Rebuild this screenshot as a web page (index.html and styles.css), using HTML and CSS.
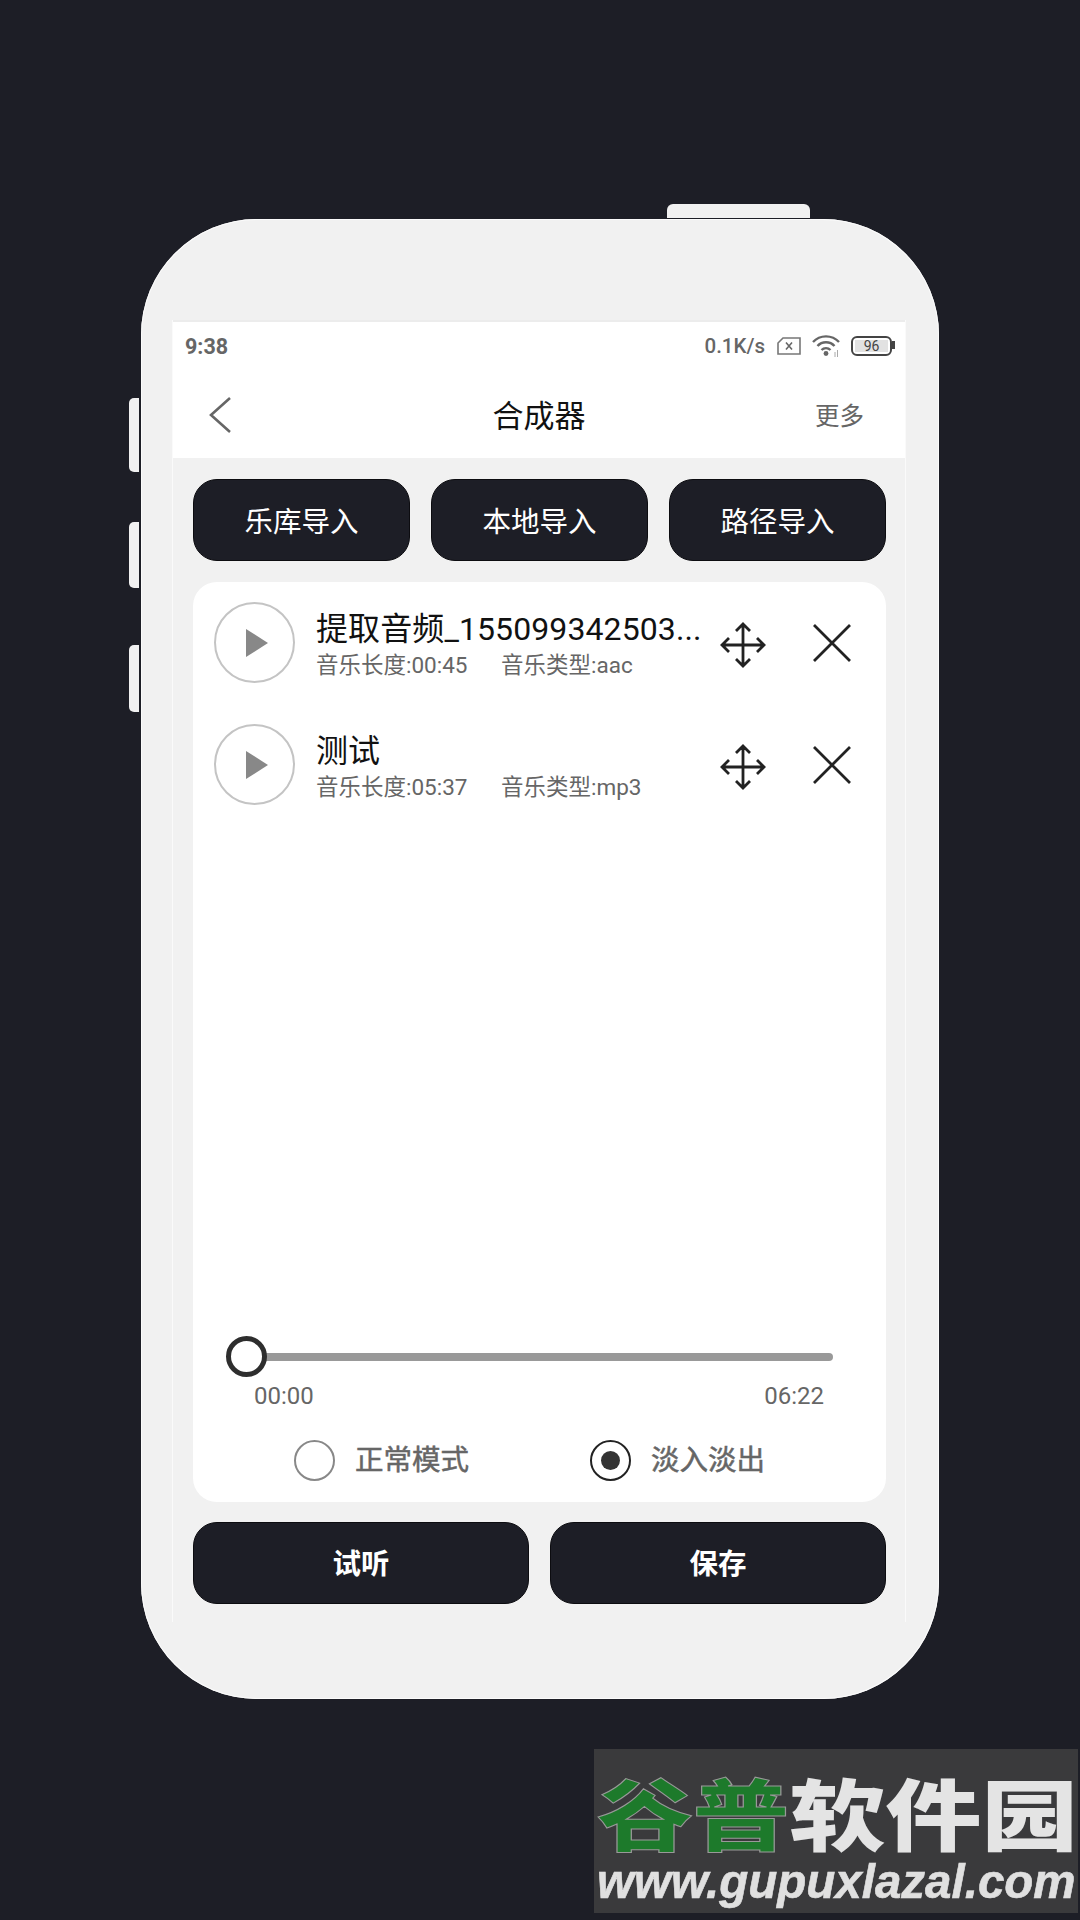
FILE: index.html
```html
<!DOCTYPE html>
<html lang="zh">
<head>
<meta charset="utf-8">
<title>合成器</title>
<link rel="stylesheet" href="styles.css">
</head>
<body>
<div class="phone">
  <span class="hw hw-top"></span>
  <span class="hw hw-a"></span>
  <span class="hw hw-b"></span>
  <span class="hw hw-c"></span>
  <div class="screen">
    <div class="status">
      <span class="clock">9:38</span>
      <div class="status-right">
        <span class="speed">0.1K/s</span>
        <svg class="sim" width="24" height="18" viewBox="0 0 24 18"><path d="M6 1H23V17H1V6Z" fill="none" stroke="#777" stroke-width="1.6"/><path d="M9 5.500L15 12.500M15 5.500L9 12.500" stroke="#666" stroke-width="1.6"/></svg>
        <svg class="wifi" width="28" height="22" viewBox="0 0 28 22"><g fill="none" stroke="#666" stroke-width="2.4"><path d="M1 7C8 -0.5 20 -0.5 27 7"/><path d="M5.5 11C10 6 18 6 22.500 11"/><path d="M9.500 15C12 12.500 16 12.500 18.500 15"/></g><circle cx="14" cy="18.500" r="2.400" fill="#666"/><path d="M23 17V22M25.500 15V22" stroke="#aaa" stroke-width="1"/></svg>
        <div class="battery"><span class="cell">96</span></div>
      </div>
    </div>
    <div class="nav">
      <svg class="back" width="22" height="36" viewBox="0 0 22 36"><path d="M21 1L2 18L21 35" fill="none" stroke="#666" stroke-width="2.600"/></svg>
      <span class="title">合成器</span>
      <span class="more">更多</span>
    </div>
    <div class="body">
      <div class="top-actions">
        <button class="btn">乐库导入</button>
        <button class="btn">本地导入</button>
        <button class="btn">路径导入</button>
      </div>
      <div class="card">
        <div class="track">
          <div class="play"><svg width="22" height="28" viewBox="0 0 22 28"><path d="M0 0L22 14L0 28Z" fill="#888"/></svg></div>
          <div class="meta">
            <div class="name">提取音频_155099342503...</div>
            <div class="info"><span class="len">音乐长度:00:45</span><span>音乐类型:aac</span></div>
          </div>
          <svg class="move" width="46" height="46" viewBox="0 0 46 46"><path d="M23 2V44M2 23H44M16 9L23 2L30 9M16 37L23 44L30 37M9 16L2 23L9 30M37 16L44 23L37 30" fill="none" stroke="#222" stroke-width="2.800"/></svg>
          <svg class="close" width="40" height="40" viewBox="0 0 40 40"><path d="M2 2L38 38M38 2L2 38" stroke="#222" stroke-width="2.800"/></svg>
        </div>
        <div class="track">
          <div class="play"><svg width="22" height="28" viewBox="0 0 22 28"><path d="M0 0L22 14L0 28Z" fill="#888"/></svg></div>
          <div class="meta">
            <div class="name">测试</div>
            <div class="info"><span class="len">音乐长度:05:37</span><span>音乐类型:mp3</span></div>
          </div>
          <svg class="move" width="46" height="46" viewBox="0 0 46 46"><path d="M23 2V44M2 23H44M16 9L23 2L30 9M16 37L23 44L30 37M9 16L2 23L9 30M37 16L44 23L37 30" fill="none" stroke="#222" stroke-width="2.800"/></svg>
          <svg class="close" width="40" height="40" viewBox="0 0 40 40"><path d="M2 2L38 38M38 2L2 38" stroke="#222" stroke-width="2.800"/></svg>
        </div>
        <div class="slider"><span class="rail"></span><span class="knob"></span></div>
        <div class="times"><span>00:00</span><span>06:22</span></div>
        <div class="modes">
          <label class="mode"><span class="radio"></span><span class="mode-text">正常模式</span></label>
          <label class="mode"><span class="radio on"></span><span class="mode-text">淡入淡出</span></label>
        </div>
      </div>
      <div class="bottom-actions">
        <button class="btn strong">试听</button>
        <button class="btn strong">保存</button>
      </div>
    </div>
  </div>
</div>
<div class="mark">
  <div class="mark-cn"><span class="green">谷普</span><span>软件园</span></div>
  <div class="mark-url">www.gupuxlazal.com</div>
</div>
</body>
</html>
```
FILE: styles.css
```css
* { box-sizing: border-box; }
html, body { margin: 0; padding: 0; }
body {
  width: 1080px;
  height: 1920px;
  overflow: hidden;
  background: #1d1e26;
  padding-top: 219px;
  font-family: Roboto, "Noto Sans CJK SC", sans-serif;
}
.phone {
  position: relative;
  width: 798px;
  height: 1480px;
  margin-left: 141px;
  padding: 101px 33px 0 31px;
  background: #f1f1f1;
  border-radius: 116px;
  box-shadow: inset 0 0 0 1px #fbfbfb;
}
.hw { position: absolute; background: #f1f1f1; }
.hw-top { left: 526px; top: -15px; width: 143px; height: 14px; border-radius: 6px 6px 0 0; }
.hw-a, .hw-b, .hw-c { left: -12px; width: 10px; border-radius: 5px 0 0 5px; }
.hw-a { top: 179px; height: 74px; }
.hw-b { top: 303px; height: 66px; }
.hw-c { top: 426px; height: 67px; }
.screen {
  width: 734px;
  height: 1302px;
  border-left: 1px solid #fafafa;
  border-right: 1px solid #fafafa;
}
.status {
  height: 52px;
  background: #fff;
  border-top: 2px solid #ececec;
  padding: 0 10px 2px 12px;
  display: flex;
  align-items: center;
  justify-content: space-between;
  color: #666;
  font-weight: 500;
  font-size: 20.500px;
}
.clock { font-size: 21.500px; font-weight: 700; }
.status-right { display: flex; align-items: center; }
.speed { margin-right: 12px; }
.sim { margin-right: 11px; }
.wifi { margin-right: 11px; }
.battery {
  position: relative;
  width: 41px;
  height: 20px;
  border: 2px solid #444;
  border-radius: 6px;
  padding: 2px;
  margin-right: 3px;
  display: flex;
}
.battery::after {
  content: "";
  position: absolute;
  right: -5px;
  top: 3px;
  width: 3px;
  height: 8px;
  background: #444;
}
.cell {
  flex: 1;
  background: #e2e2e2;
  color: #444;
  font-size: 14px;
  font-weight: 400;
  line-height: 12px;
  text-align: center;
}
.nav {
  height: 86px;
  background: #fff;
  display: grid;
  grid-template-columns: 1fr auto 1fr;
  align-items: center;
  padding: 0 41px;
}
.back { margin-left: -5px; }
.title { font-size: 31px; color: #111; padding-bottom: 4px; }
.more { font-size: 24.500px; color: #666; justify-self: end; padding-bottom: 2px; }
.body { padding: 21px 19px 0 20px; }
.top-actions { display: flex; gap: 21px; }
.btn {
  flex: 1;
  height: 82px;
  padding: 0 0 2px;
  border: 1px solid #0c0c10;
  border-radius: 24px;
  background: #1d1e26;
  color: #fff;
  font-family: inherit;
  font-size: 28.500px;
}
.strong { font-weight: 700; padding-bottom: 4px; }
.card {
  height: 920px;
  margin-top: 21px;
  padding-top: 21px;
  background: #fff;
  border-radius: 24px;
  display: flex;
  flex-direction: column;
}
.track {
  display: flex;
  height: 80px;
  margin-bottom: 42px;
  padding-left: 21px;
  align-items: flex-start;
}
.play {
  flex: none;
  width: 81px;
  height: 81px;
  margin-top: -1px;
  border: 2px solid #c4c4c4;
  border-radius: 50%;
  display: flex;
  align-items: center;
  justify-content: center;
  padding-left: 5px;
}
.meta { width: 386px; margin-left: 21px; padding-top: 6px; }
.name { font-size: 32px; letter-spacing: .1px; line-height: 40px; color: #111; white-space: nowrap; }
.info { font-size: 22.500px; line-height: 30px; margin-top: 1px; color: #666; display: flex; white-space: nowrap; }
.len { width: 185px; }
.move { margin: 19px 0 0 18px; flex: none; }
.close { margin: 20px 0 0 46px; flex: none; }
.slider {
  position: relative;
  margin: auto 53px 0 33px;
  height: 41px;
  display: flex;
  align-items: center;
}
.rail { flex: 1; height: 8px; background: #999; border-radius: 4px; margin-left: 10px; }
.knob {
  position: absolute;
  left: 0;
  top: 0;
  width: 41px;
  height: 41px;
  background: #fff;
  border: 5px solid #2e2e2e;
  border-radius: 50%;
}
.times {
  display: flex;
  justify-content: space-between;
  margin-top: 4px;
  padding: 0 62px 0 61px;
  font-size: 24px;
  line-height: 30px;
  color: #666;
}
.modes {
  display: flex;
  gap: 121px;
  margin-top: 28px;
  padding: 0 0 21px 101px;
}
.mode {
  display: flex;
  align-items: center;
  gap: 20px;
  font-size: 28.500px;
  color: #666;
  line-height: 40px;
  -webkit-text-stroke: .5px #666;
}
.mode-text { padding-top: 2px; }
.radio {
  width: 41px;
  height: 41px;
  border: 2px solid #888;
  border-radius: 50%;
  display: flex;
  align-items: center;
  justify-content: center;
}
.radio.on { border-color: #222; }
.radio.on::before {
  content: "";
  width: 19px;
  height: 19px;
  border-radius: 50%;
  background: #333;
}
.bottom-actions { display: flex; gap: 21px; margin-top: 20px; }
.mark {
  width: 484px;
  height: 164px;
  margin: 50px 0 0 594px;
  padding: 31px 0 0 3px;
  background: #3a3a3c;
  filter: blur(.6px);
  overflow: hidden;
}
.mark-cn {
  display: flex;
  font-size: 78px;
  line-height: 78px;
  font-weight: 900;
  color: #e4e4e4;
  transform: scaleX(1.232);
  transform-origin: left center;
}
.green { color: #1d7a2b; -webkit-text-stroke: 1px #999; }
.mark-url {
  margin-top: 1px;
  font-family: "Liberation Sans", sans-serif;
  font-size: 47.500px;
  line-height: 46px;
  font-weight: 700;
  font-style: italic;
  color: #e0e0e0;
  white-space: nowrap;
  -webkit-text-stroke: .6px #e0e0e0;
}
```
